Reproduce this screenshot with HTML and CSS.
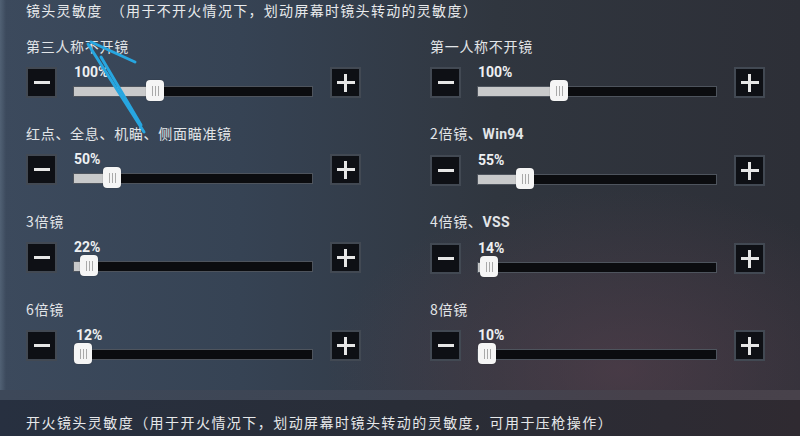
FILE: index.html
```html
<!DOCTYPE html>
<html lang="zh-CN">
<head>
<meta charset="utf-8">
<title>镜头灵敏度</title>
<link rel="stylesheet" href="styles.css">
</head>
<body>
<div class="screen">
  <div class="edge"></div>
  <div class="top">
    <div class="header">镜头灵敏度　（用于不开火情况下，划动屏幕时镜头转动的灵敏度）</div>
    <div class="grid">
      <div class="control">
        <div class="label">第三人称不开镜</div>
        <div class="slider">
          <div class="btn"><span class="minus"></span></div>
          <div class="mid">
            <div class="pct">100%</div>
            <div class="track"><div class="fill" style="width:81px"></div><div class="knob" style="left:72px"><i></i><i></i><i></i></div></div>
          </div>
          <div class="btn"><span class="plus"></span></div>
        </div>
      </div>
      <div class="control">
        <div class="label">第一人称不开镜</div>
        <div class="slider">
          <div class="btn"><span class="minus"></span></div>
          <div class="mid">
            <div class="pct">100%</div>
            <div class="track"><div class="fill" style="width:81px"></div><div class="knob" style="left:72px"><i></i><i></i><i></i></div></div>
          </div>
          <div class="btn"><span class="plus"></span></div>
        </div>
      </div>
      <div class="control">
        <div class="label">红点、全息、机瞄、侧面瞄准镜</div>
        <div class="slider">
          <div class="btn"><span class="minus"></span></div>
          <div class="mid">
            <div class="pct">50%</div>
            <div class="track"><div class="fill" style="width:38px"></div><div class="knob" style="left:29px"><i></i><i></i><i></i></div></div>
          </div>
          <div class="btn"><span class="plus"></span></div>
        </div>
      </div>
      <div class="control">
        <div class="label">2倍镜、<b>Win94</b></div>
        <div class="slider">
          <div class="btn"><span class="minus"></span></div>
          <div class="mid">
            <div class="pct">55%</div>
            <div class="track"><div class="fill" style="width:47px"></div><div class="knob" style="left:38px"><i></i><i></i><i></i></div></div>
          </div>
          <div class="btn"><span class="plus"></span></div>
        </div>
      </div>
      <div class="control">
        <div class="label">3倍镜</div>
        <div class="slider">
          <div class="btn"><span class="minus"></span></div>
          <div class="mid">
            <div class="pct">22%</div>
            <div class="track"><div class="fill" style="width:15px"></div><div class="knob" style="left:6px"><i></i><i></i><i></i></div></div>
          </div>
          <div class="btn"><span class="plus"></span></div>
        </div>
      </div>
      <div class="control">
        <div class="label">4倍镜、<b>VSS</b></div>
        <div class="slider">
          <div class="btn"><span class="minus"></span></div>
          <div class="mid">
            <div class="pct">14%</div>
            <div class="track"><div class="fill" style="width:11px"></div><div class="knob" style="left:2px"><i></i><i></i><i></i></div></div>
          </div>
          <div class="btn"><span class="plus"></span></div>
        </div>
      </div>
      <div class="control">
        <div class="label">6倍镜</div>
        <div class="slider">
          <div class="btn"><span class="minus"></span></div>
          <div class="mid">
            <div class="pct pct-in">12%</div>
            <div class="track"><div class="fill" style="width:9px"></div><div class="knob" style="left:0px"><i></i><i></i><i></i></div></div>
          </div>
          <div class="btn"><span class="plus"></span></div>
        </div>
      </div>
      <div class="control">
        <div class="label">8倍镜</div>
        <div class="slider">
          <div class="btn"><span class="minus"></span></div>
          <div class="mid">
            <div class="pct">10%</div>
            <div class="track"><div class="fill" style="width:9px"></div><div class="knob" style="left:0px"><i></i><i></i><i></i></div></div>
          </div>
          <div class="btn"><span class="plus"></span></div>
        </div>
      </div>
    </div>
  </div>
  <div class="band"></div>
  <div class="bottom">
    <div class="header2">开火镜头灵敏度（用于开火情况下，划动屏幕时镜头转动的灵敏度，可用于压枪操作）</div>
  </div>
  <svg class="arrow" width="800" height="436" viewBox="0 0 800 436">
    <g stroke="#27a6e0" stroke-width="3" stroke-linecap="round" fill="none">
      <line x1="91" y1="42" x2="135" y2="62"/>
      <line x1="88" y1="44" x2="144" y2="132"/>
      <line x1="101" y1="57" x2="141" y2="125"/>
    </g>
  </svg>
</div>
</body>
</html>
```
FILE: styles.css
```css
html, body {
  margin: 0;
  padding: 0;
}
body {
  width: 800px;
  height: 436px;
  overflow: hidden;
  background: #2e333d;
  font-family: "Noto Sans CJK SC", "Noto Sans", sans-serif;
  color: #e4e6e9;
}
.screen {
  position: relative;
  width: 800px;
  height: 436px;
  overflow: hidden;
  display: flex;
  flex-direction: column;
  background:
    radial-gradient(ellipse 420px 260px at 620px 370px, rgba(96, 66, 80, 0.5), rgba(96, 66, 80, 0) 70%),
    linear-gradient(90deg, #3c4a5d 0%, #364354 30%, #30363f 62%, #2d2f37 100%);
}
.edge {
  position: absolute;
  left: 0;
  top: 0;
  width: 6px;
  height: 390px;
  background: linear-gradient(90deg, rgba(120, 140, 160, 0.35), rgba(120, 140, 160, 0));
}
.top {
  padding: 2px 0 0 26px;
  height: 390px;
  box-sizing: border-box;
}
.header {
  font-size: 14px;
  line-height: 17px;
  letter-spacing: 1.3px;
  color: #e8eaec;
  white-space: nowrap;
}
.grid {
  margin-top: 17px;
  display: grid;
  grid-template-columns: 335px 335px;
  column-gap: 69px;
  row-gap: 24px;
}
.control {
  display: flex;
  flex-direction: column;
}
.label {
  font-size: 14px;
  line-height: 20px;
  letter-spacing: 0.7px;
  color: #e2e5e8;
  white-space: nowrap;
}
.label b {
  font-family: Roboto, "Liberation Sans", sans-serif;
  font-weight: 700;
  letter-spacing: 0.3px;
}
.slider {
  margin-top: 11px;
  display: flex;
  align-items: flex-start;
  height: 32px;
}
.btn {
  width: 27px;
  height: 27px;
  border: 2px solid rgba(110, 120, 135, 0.55);
  background: #0e1015;
  display: flex;
  align-items: center;
  justify-content: center;
  flex: none;
}
.minus {
  display: block;
  width: 16px;
  height: 3px;
  background: #e6e6e6;
}
.plus {
  display: block;
  width: 18px;
  height: 18px;
  background:
    linear-gradient(#e6e6e6, #e6e6e6) center / 18px 3px no-repeat,
    linear-gradient(#e6e6e6, #e6e6e6) center / 3px 18px no-repeat;
}
.mid {
  width: 240px;
  margin: 0 17px 0 16px;
  display: flex;
  flex-direction: column;
}
.pct {
  font-family: Roboto, "Liberation Sans", sans-serif;
  font-weight: 700;
  font-size: 14px;
  line-height: 14px;
  margin-top: -2px;
  color: #eef0f2;
  padding-left: 1px;
}
.pct-in {
  padding-left: 3px;
}
.track {
  position: relative;
  margin-top: 7px;
  height: 9px;
  background: #0b0c0f;
  border: 1px solid rgba(95, 102, 112, 0.8);
}
.fill {
  height: 100%;
  background: #c8c9ca;
}
.knob {
  position: absolute;
  top: -7px;
  width: 18px;
  height: 21px;
  border-radius: 4px;
  background: #f5f5f5;
  box-shadow: 0 0 1px rgba(0, 0, 0, 0.5);
  display: flex;
  align-items: center;
  justify-content: center;
  gap: 2px;
}
.knob i {
  display: block;
  width: 1px;
  height: 10px;
  background: #a9a9a9;
}
.band {
  height: 10px;
  flex: none;
  background: linear-gradient(90deg, #3d4859 0%, #3e4553 45%, #47414b 80%, #48424b 100%);
}
.bottom {
  flex: 1;
  padding: 12px 0 0 26px;
  background: linear-gradient(90deg, #273040 0%, #292d37 50%, #2f2a31 100%);
}
.header2 {
  font-size: 14px;
  line-height: 20px;
  letter-spacing: 1.45px;
  color: #e6e8ea;
  white-space: nowrap;
}
.arrow {
  position: absolute;
  left: 0;
  top: 0;
  pointer-events: none;
}
```
